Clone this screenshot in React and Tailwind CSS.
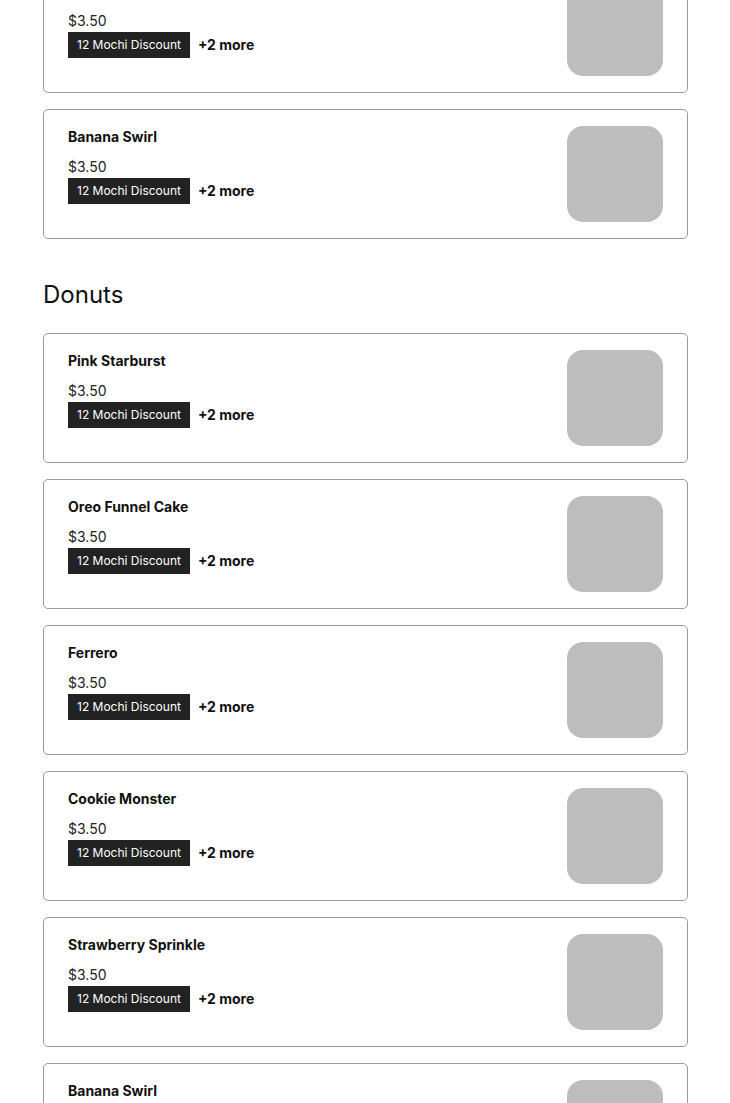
import React from 'react';

const ItemCard = ({ name, price }) => {
    return (
        <div className="flex justify-between border border-[#9a9a9a] rounded-[5px] px-6 py-4">
            <div className="flex flex-col items-start">
                <p className="text-sm font-bold text-[#111] leading-[22px]">{name}</p>
                <p className="mt-2 text-sm text-[#222] leading-[22px]">{price}</p>
                <div className="flex items-center gap-2">
                    <span className="h-[26px] px-[9px] flex items-center bg-[#222] text-white text-xs">12 Mochi Discount</span>
                    <span className="text-sm font-bold text-[#111]">+2 more</span>
                </div>
            </div>
            <div className="w-24 h-24 rounded-2xl bg-[#bdbdbd] shrink-0"></div>
        </div>
    );
};

const App = () => {
    const mochi = ['Strawberry Sprinkle', 'Banana Swirl'];
    const donuts = ['Pink Starburst', 'Oreo Funnel Cake', 'Ferrero', 'Cookie Monster', 'Strawberry Sprinkle', 'Banana Swirl'];

    return (
        <div className="h-[1103px] overflow-hidden bg-white" style={{ fontFamily: 'Inter, "Liberation Sans", sans-serif' }}>
            <div className="-mt-[37px] pl-[43px] pr-[42px]">
                <section className="flex flex-col gap-4">
                    {mochi.map((n, i) => (
                        <ItemCard key={i} name={n} price="$3.50" />
                    ))}
                </section>

                <h2 className="mt-10 mb-[22px] text-2xl leading-8 text-[#111]">Donuts</h2>

                <section className="flex flex-col gap-4">
                    {donuts.map((n, i) => (
                        <ItemCard key={i} name={n} price="$3.50" />
                    ))}
                </section>
            </div>
        </div>
    );
};

export default App;
